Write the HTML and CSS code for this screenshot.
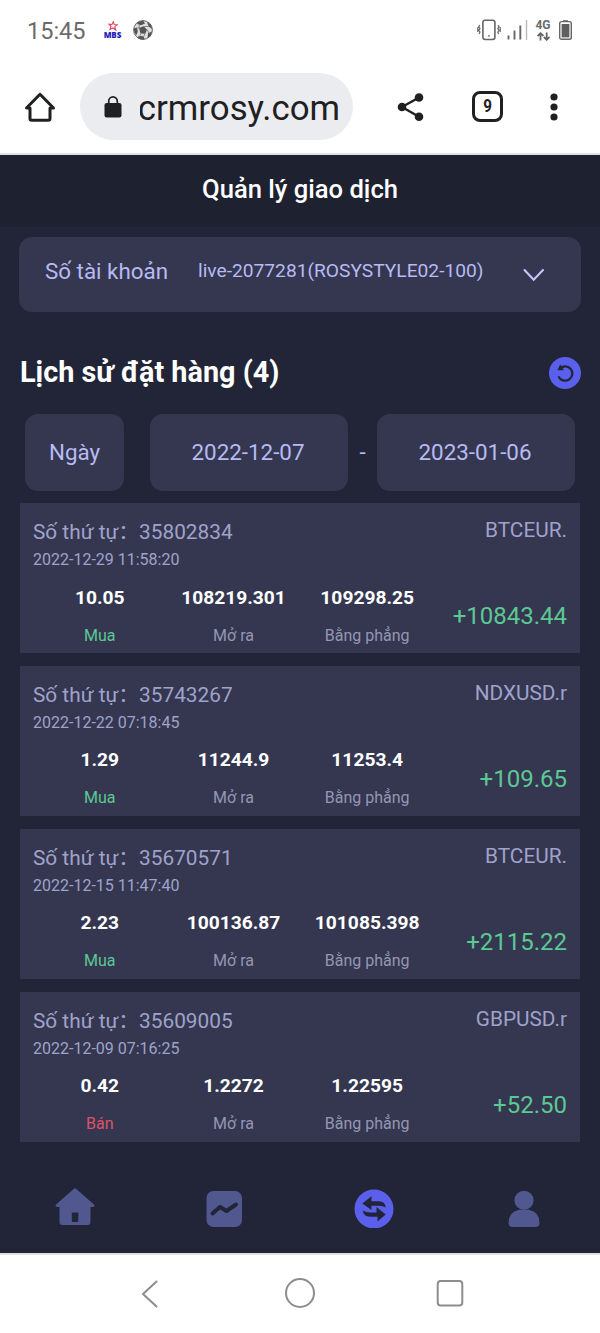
FILE: index.html
```html
<!DOCTYPE html>
<html lang="vi">
<head>
    <meta charset="UTF-8">
    <meta name="viewport" content="width=device-width, initial-scale=1.0">
    <title>Quản lý giao dịch</title>
    <link rel="stylesheet" href="styles.css">
</head>
<body>
    <div class="status-bar">
        <span class="clock">15:45</span>
        <div class="mbs">
            <svg width="10" height="10" viewBox="0 0 10 10"><path d="M5.3 .8 6.2 3.5 9.3 3.8 6.8 5.6 7.8 9 5 7 2 8.5 3 5.4.9 3.1 4 3.5Z" fill="none" stroke="#e2475d" stroke-width="1.1"/></svg>
            <span>MBS</span>
        </div>
        <svg class="ball" width="20" height="20" viewBox="0 0 20 20">
            <circle cx="10" cy="10" r="9.4" fill="#dedede" stroke="#666" stroke-width="1"/>
            <path d="M6 8 10.5 6.3 14 9.5 12.3 13.8 7.5 13.5ZM5 2 10 .6 12 3.5 8 5.2 4 4ZM14 1.8 18 4.8 19.3 9 15.5 6.5ZM.8 8.5 3.8 7.5 4.8 11.5 3.5 15 1.5 13ZM5.5 16 10.5 16.3 11.5 19.2 8 19.4 5 18ZM15 13.3 19 11.5 17.8 16 14.5 18.3Z" fill="#555"/>
            <path d="M6 8 6.5 4.5M10.5 6.5 15.5 6.5M14 9.5 16 13.3M8 13.5 6.5 16.5M6 8 3.8 8M12 13.5 10.5 16.8" stroke="#888" fill="none"/>
        </svg>
        <div class="status-icons">
            <svg width="24" height="22" viewBox="0 0 24 22" fill="none" stroke="#666">
                <rect x="5.9" y="1.2" width="12" height="19.3" rx="2.2" stroke-width="1.6"/>
                <path d="M2.9 6 1.7 7.7 3 9.5 1.7 11.3 3 13 2 15M.8 8V13M20.9 6 22.1 7.7 20.8 9.5 22.1 11.3 20.8 13 21.8 15M23.2 8V13" stroke-width="1.2"/>
                <circle cx="12" cy="16.8" r=".9" fill="#666" stroke="none"/>
            </svg>
            <svg class="signal" width="21" height="20" viewBox="0 0 21 20" fill="none" stroke="#666" stroke-width="1.9">
                <path d="M1.5 19.5V15.5M7.5 19.5V10.5M13.3 19.5V5.5"/>
                <path d="M19.5 20V0" stroke="#bbb" stroke-width="1.4"/>
            </svg>
            <div class="network">
                <span>4G</span>
                <svg width="13" height="9" viewBox="0 0 13 9" fill="none" stroke="#666" stroke-width="1.8"><path d="M3.5 8.5V1.3M.6 4 3.5 1.2 6.4 4M9.7.5V7.5M6.8 5 9.7 7.8 12.6 5"/></svg>
            </div>
            <svg class="battery" width="13" height="20" viewBox="0 0 13 20"><path d="M4 .2H9V2H4Z" fill="#666"/><rect x=".7" y="1.6" width="11.6" height="17.7" rx="1.8" fill="none" stroke="#666" stroke-width="1.4"/><path d="M2.6 4H10.4V17.4H2.6Z" fill="#5f5f5f"/></svg>
        </div>
    </div>

    <div class="browser-bar">
        <svg class="home-icon" width="32" height="32" viewBox="0 0 32 32" fill="none" stroke="#1f2022" stroke-width="3"><path d="M2.5 17H6V27.5Q6 29.3 7.8 29.3H24.2Q26 29.3 26 27.5V17H29.5L16 3.3Z" stroke-linejoin="round"/></svg>
        <div class="url">
            <svg width="18" height="22" viewBox="0 0 18 22"><rect x=".5" y="7" width="17" height="14.5" rx="2.2" fill="#1f2022"/><path d="M4.7 8V5.2A4.3 4.3 0 0 1 13.3 5.2V8" fill="none" stroke="#1f2022" stroke-width="1.7"/></svg>
            <span class="url-text"><span>crmrosy.com</span></span>
        </div>
        <svg class="share-icon" width="28" height="30" viewBox="0 0 28 30"><path d="M22 5.5 5 15 22 24.7" fill="none" stroke="#1f2022" stroke-width="2.4"/><g fill="#1f2022"><circle cx="22" cy="5.5" r="4.3"/><circle cx="5" cy="15" r="4.3"/><circle cx="22" cy="24.7" r="4.3"/></g></svg>
        <div class="tabs"><span>9</span></div>
        <svg class="more-icon" width="8" height="28" viewBox="0 0 8 28" fill="#1f2022"><circle cx="4" cy="4" r="3.6"/><circle cx="4" cy="14" r="3.6"/><circle cx="4" cy="24" r="3.6"/></svg>
    </div>

    <div class="page">
        <header>Quản lý giao dịch</header>

        <div class="account">
            <span class="account-label">Số tài khoản</span>
            <span class="account-value">live-2077281(ROSYSTYLE02-100)</span>
            <svg width="22" height="14" viewBox="0 0 22 14" fill="none" stroke="#c3c5ff" stroke-width="2.1" stroke-linecap="round"><path d="M1.5 2 10.7 11.8 20 2"/></svg>
        </div>

        <div class="history-title">
            <h1>Lịch sử đặt hàng (4)</h1>
            <svg width="32" height="32" viewBox="0 0 32 32"><circle cx="16" cy="16" r="16" fill="#5b60ec"/><path d="M11.2 11.3A7.2 7.2 0 1 1 9.5 19.3" fill="none" stroke="#212537" stroke-width="2.2"/><path d="M11.2 7.5 8.3 13.2 15 13.3Z" fill="#212537"/></svg>
        </div>

        <div class="filters">
            <div class="filter day">Ngày</div>
            <div class="filter date">2022-12-07</div>
            <span class="dash">-</span>
            <div class="filter date">2023-01-06</div>
        </div>

        <div class="orders">
            <div class="order">
                <div class="order-info">
                    <div class="order-no">Số thứ tự：35802834</div>
                    <div class="order-time">2022-12-29 11:58:20</div>
                    <div class="order-cols">
                        <div><b>10.05</b><span class="buy">Mua</span></div>
                        <div><b>108219.301</b><span>Mở ra</span></div>
                        <div><b>109298.25</b><span>Bằng phẳng</span></div>
                    </div>
                </div>
                <div class="order-result"><span class="symbol">BTCEUR.</span><span class="profit">+10843.44</span></div>
            </div>
            <div class="order">
                <div class="order-info">
                    <div class="order-no">Số thứ tự：35743267</div>
                    <div class="order-time">2022-12-22 07:18:45</div>
                    <div class="order-cols">
                        <div><b>1.29</b><span class="buy">Mua</span></div>
                        <div><b>11244.9</b><span>Mở ra</span></div>
                        <div><b>11253.4</b><span>Bằng phẳng</span></div>
                    </div>
                </div>
                <div class="order-result"><span class="symbol">NDXUSD.r</span><span class="profit">+109.65</span></div>
            </div>
            <div class="order">
                <div class="order-info">
                    <div class="order-no">Số thứ tự：35670571</div>
                    <div class="order-time">2022-12-15 11:47:40</div>
                    <div class="order-cols">
                        <div><b>2.23</b><span class="buy">Mua</span></div>
                        <div><b>100136.87</b><span>Mở ra</span></div>
                        <div><b>101085.398</b><span>Bằng phẳng</span></div>
                    </div>
                </div>
                <div class="order-result"><span class="symbol">BTCEUR.</span><span class="profit">+2115.22</span></div>
            </div>
            <div class="order">
                <div class="order-info">
                    <div class="order-no">Số thứ tự：35609005</div>
                    <div class="order-time">2022-12-09 07:16:25</div>
                    <div class="order-cols">
                        <div><b>0.42</b><span class="sell">Bán</span></div>
                        <div><b>1.2272</b><span>Mở ra</span></div>
                        <div><b>1.22595</b><span>Bằng phẳng</span></div>
                    </div>
                </div>
                <div class="order-result"><span class="symbol">GBPUSD.r</span><span class="profit">+52.50</span></div>
            </div>
        </div>

        <nav>
            <svg width="40" height="40" viewBox="0 0 40 40"><path d="M20 .2Q20.6.2 21 .8L39.2 16.8Q40 19 37.5 19H35.5V34Q35.5 37 32.5 37H7.5Q4.5 37 4.5 34V19H2.5Q0 19 .8 16.8L19 .8Q19.4.2 20 .2Z" fill="#50588f"/><rect x="16.8" y="24.5" width="6.5" height="9.5" rx="1" fill="#212537"/></svg>
            <svg width="40" height="40" viewBox="0 0 40 40"><rect x="2.5" y="3" width="35.5" height="36" rx="7" fill="#50588f"/><path d="M8.5 25.5 16 19 22.5 23 32 16.5" fill="none" stroke="#212537" stroke-width="4" stroke-linecap="round" stroke-linejoin="round"/></svg>
            <svg width="40" height="40" viewBox="0 0 40 40"><circle cx="20" cy="21" r="19.5" fill="#5b60ec"/><path d="M8.3 15.5 17.5 8.3V13.3H25Q31 13.3 31.7 19.5Q29 17.7 25 17.7H17.5V22ZM31.7 26.5 23.5 33.5V28.7H16Q9.5 28.7 8.8 22.5Q12 24.5 16 24.5H22.5V19Z" fill="#212537"/></svg>
            <svg width="40" height="40" viewBox="0 0 40 40" fill="#50588f"><circle cx="20" cy="12.3" r="9.6"/><path d="M15 21.8H25Q35.5 24 35.5 35Q35.5 39 31.5 39H8.5Q4.5 39 4.5 35Q4.5 24 15 21.8Z"/></svg>
        </nav>
    </div>

    <div class="system-bar">
        <svg width="32" height="32" viewBox="0 0 32 32" fill="none" stroke="#8d8d8d" stroke-width="2" stroke-linecap="round"><path d="M22.5 4.5 9 17 22.5 29.5" stroke-linejoin="round"/></svg>
        <svg width="32" height="32" viewBox="0 0 32 32" fill="none" stroke="#8d8d8d" stroke-width="2"><circle cx="16" cy="16" r="14"/></svg>
        <svg width="32" height="32" viewBox="0 0 32 32" fill="none" stroke="#8d8d8d" stroke-width="2"><rect x="3.7" y="4" width="24.6" height="24.6" rx="3"/></svg>
    </div>
</body>
</html>
```

FILE: styles.css
```css
* {
    box-sizing: border-box;
}
body {
    margin: 0;
    height: 1333px;
    display: flex;
    flex-direction: column;
    overflow: hidden;
    background-color: #fff;
    font-family: Roboto, "Noto Sans CJK SC", sans-serif;
}
svg {
    display: block;
    flex-shrink: 0;
}

/* Android status bar */
.status-bar {
    height: 62px;
    padding: 0 28px 2px 27px;
    display: flex;
    align-items: center;
    color: #6b6b6b;
}
.clock {
    padding-top: 2px;
    font-size: 23.5px;
    width: 76px;
}
.mbs {
    display: flex;
    flex-direction: column;
    align-items: center;
    width: 19px;
    color: #1c22b8;
    font: 800 8px/8px "Open Sans", sans-serif;
}
.ball {
    margin-left: 11px;
}
.status-icons {
    display: flex;
    align-items: center;
    margin-left: auto;
}
.signal {
    margin-left: 6px;
}
.network {
    display: flex;
    flex-direction: column;
    align-items: center;
    margin-left: 6px;
    width: 18px;
    gap: 1px;
    font: 700 12px/12px Roboto, sans-serif;
}
.battery {
    margin-left: 7px;
}

/* browser toolbar */
.browser-bar {
    height: 93px;
    padding: 11px 24px 13px;
    display: flex;
    align-items: center;
    border-bottom: 2px solid #e0e1e6;
    color: #1f2022;
}
.url {
    width: 273px;
    height: 67px;
    margin-left: 24px;
    padding-left: 24px;
    display: flex;
    align-items: center;
    border-radius: 34px;
    background-color: #ebecf0;
}
.url-text {
    display: flex;
    justify-content: flex-end;
    width: 200px;
    margin-left: 18px;
    padding-top: 3px;
    overflow: hidden;
    font-size: 34.8px;
}
.share-icon {
    margin-left: 44px;
}
.tabs {
    width: 31px;
    height: 31px;
    margin-left: 47px;
    border: 3px solid #1f2022;
    border-radius: 8px;
    font-size: 19px;
    font-weight: 700;
    line-height: 24px;
    text-align: center;
}
.tabs span {
    display: block;
    transform: scaleX(.8);
}
.more-icon {
    margin-left: 47px;
}

/* page */
.page {
    height: 1098px;
    background-color: #212537;
    color: #b8baf3;
}
header {
    height: 72px;
    background-color: #1e2130;
    color: #fff;
    font-size: 25.6px;
    font-weight: 500;
    line-height: 69px;
    text-align: center;
}
.account {
    height: 75px;
    margin: 10px 19px 0;
    padding: 0 36px 0 26px;
    display: flex;
    align-items: center;
    border-radius: 13px;
    background-color: #34374f;
}
.account-label {
    width: 153px;
    padding-bottom: 8px;
    font-size: 22.4px;
}
.account-value {
    padding-bottom: 8px;
    font-size: 19.2px;
}
.account svg {
    margin-left: auto;
}
.history-title {
    height: 102px;
    padding: 20px 19px 0 20px;
    display: flex;
    align-items: center;
    justify-content: space-between;
}
h1 {
    margin: -2px 0 0;
    color: #fff;
    font-size: 28.8px;
    font-weight: 700;
}
.filters {
    height: 77px;
    padding: 0 25px;
    display: flex;
    font-size: 22.4px;
    line-height: 76px;
    text-align: center;
}
.filter {
    border-radius: 13px;
    background-color: #34374f;
}
.day {
    width: 99px;
    margin-right: 26px;
}
.date {
    width: 198px;
    padding-right: 2px;
}
.dash {
    flex: 1;
}

.orders {
    height: 640px;
    padding: 12px 20px 0;
    display: flex;
    flex-direction: column;
    gap: 12.5px;
}
.order {
    height: 150.4px;
    padding: 13px;
    display: flex;
    background-color: #34374f;
    color: #a0a2cc;
}
.order-info {
    width: 401px;
}
.order-no {
    font-size: 20.8px;
    line-height: 32px;
}
.order-time {
    font-size: 16px;
    line-height: 24px;
}
.order-cols {
    display: flex;
    margin-top: 13.5px;
    text-align: center;
}
.order-cols div {
    flex: 1;
}
.order-cols b {
    display: block;
    color: #fff;
    font-size: 19.2px;
    line-height: 24px;
}
.order-cols span {
    display: block;
    margin-top: 14px;
    color: #9496b4;
    font-size: 16px;
    line-height: 24px;
}
.order-cols .buy {
    color: #5cc894;
}
.order-cols .sell {
    color: #dc5369;
}
.order-result {
    flex: 1;
    display: flex;
    flex-direction: column;
    align-items: flex-end;
    white-space: nowrap;
}
.symbol {
    font-size: 20.8px;
    line-height: 28px;
}
.profit {
    margin-top: 57px;
    color: #5cc894;
    font-size: 24px;
    line-height: 30px;
}

nav {
    height: 122px;
    padding: 56.5px 1.5px 0 0;
    display: flex;
    justify-content: space-around;
}

/* Android navigation */
.system-bar {
    height: 80px;
    padding: 0 75px 3px;
    display: flex;
    align-items: center;
    justify-content: space-around;
    border-top: 2px solid #e0e1e6;
}
```
